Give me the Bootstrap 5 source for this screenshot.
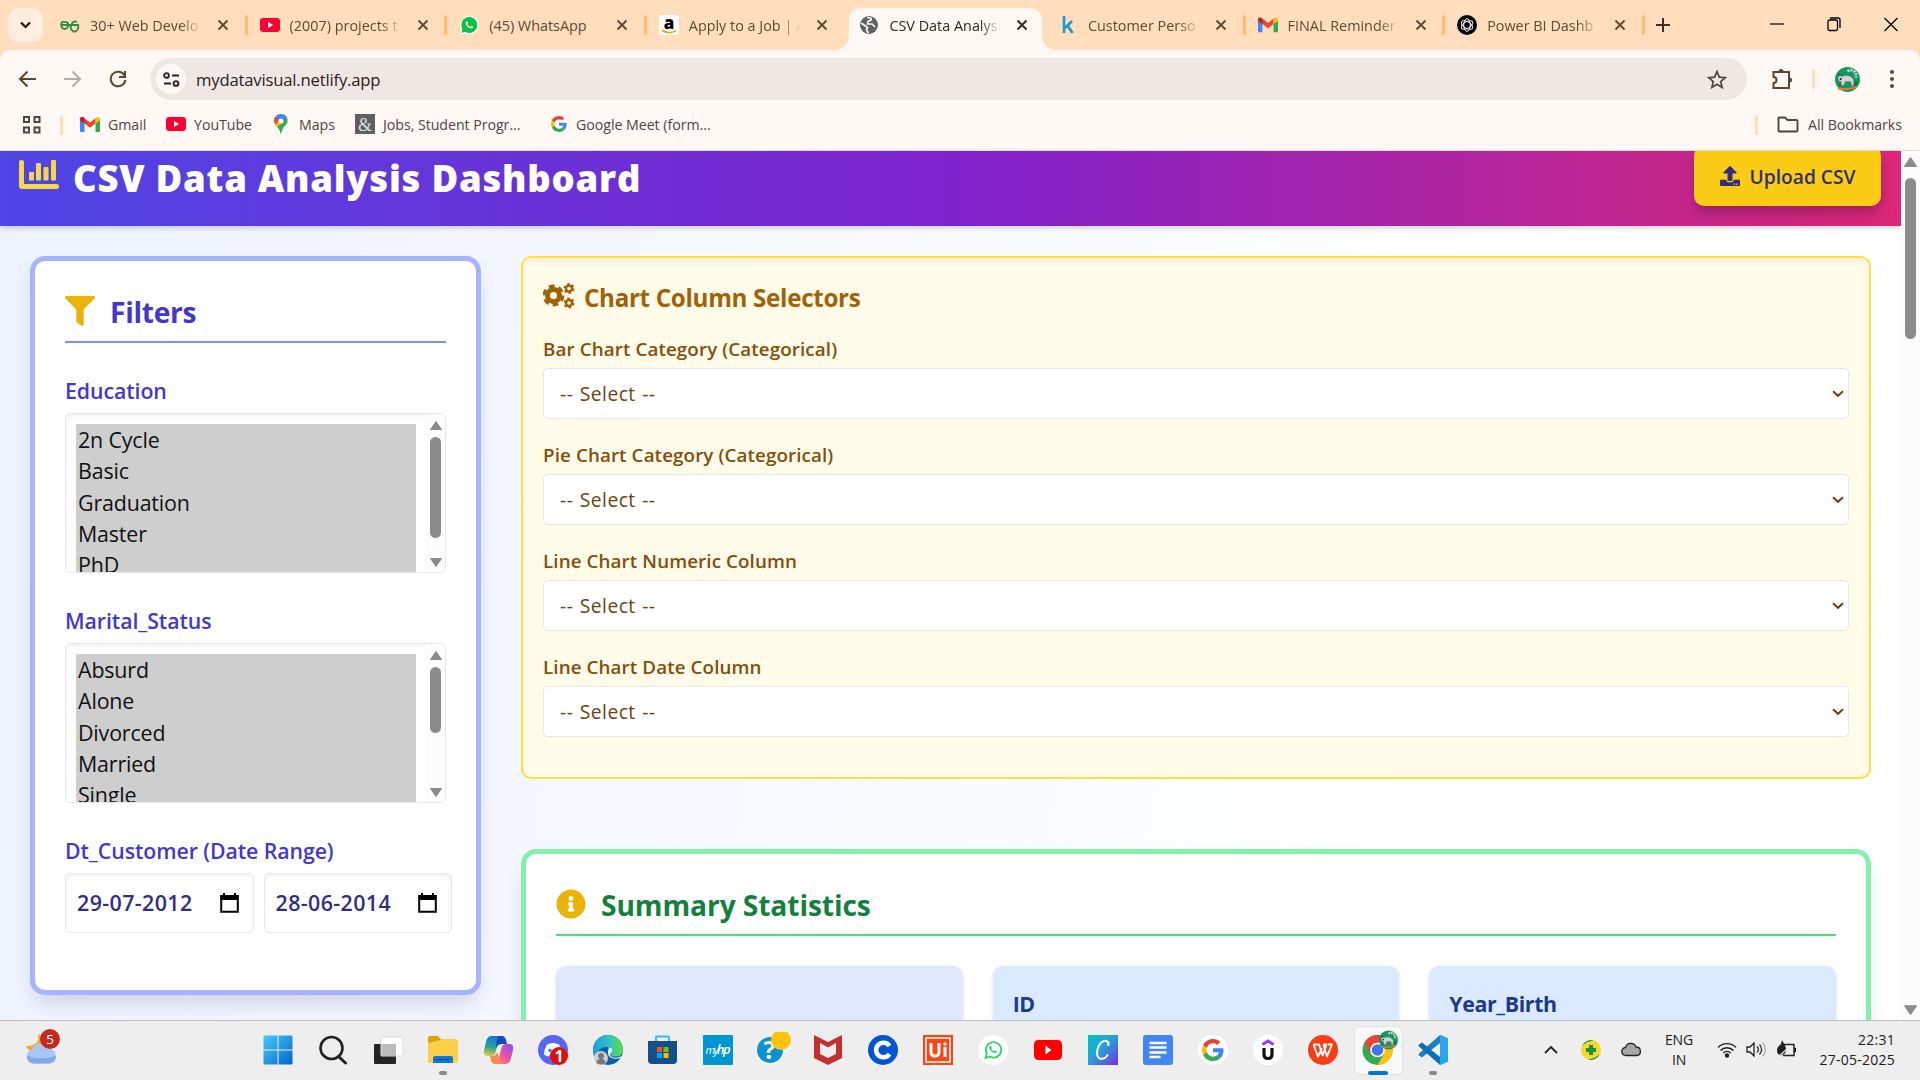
<!DOCTYPE html>
<html lang="en">
<head>
<meta charset="utf-8">
<title>CSV Data Analysis Dashboard</title>
<link rel="stylesheet" href="https://cdn.jsdelivr.net/npm/bootstrap@5.3.0/dist/css/bootstrap.min.css">
<script src="https://cdn.jsdelivr.net/npm/bootstrap@5.3.0/dist/js/bootstrap.bundle.min.js"></script>
<style>
body{width:1920px;height:1080px;overflow:hidden;font-family:"Open Sans","Noto Sans",sans-serif;background:#fff8f5;color:#4e4540}
svg{flex:none;display:block}
.tabstrip{height:50px;background:#ffddbd;padding-left:8px}
.tab-search{width:35px;height:34px;border-radius:11px;background:#ffeee0;margin:8px 7px 0 0}
.tab-item{width:199.6px;height:42px;margin-top:8px;padding:5px 0 0 10px;position:relative;font-size:14.4px;color:#5d4a33}
.tab-label{width:113px;margin-left:10px;white-space:nowrap;overflow:hidden;-webkit-mask-image:linear-gradient(90deg,#000 80%,transparent 99%);line-height:26px}
.tab-label.whole{-webkit-mask-image:none}
.tab-item>.cross{margin:6px 0 0 14px}
.tab-item.divided::after{content:"";width:3px;height:20px;border-radius:2px;background:#ffbd6e;position:absolute;right:2px;top:7px}
.tab-item.current{background:#fff8f5;border-radius:12px 12px 0 0;width:193px;margin-right:5.6px;margin-left:1px;color:#30261d}
.tab-item.current::before,.tab-item.current::after{content:"";position:absolute;bottom:0;width:14px;height:14px}
.tab-item.current::before{left:-14px;background:radial-gradient(circle at 0 0,transparent 13.5px,#fff8f5 14px)}
.tab-item.current::after{right:-14px;background:radial-gradient(circle at 100% 0,transparent 13.5px,#fff8f5 14px)}
.new-tab{margin:18px 0 0 9px}
.win-controls{margin:17px 22px 0 0;gap:43px}
.toolbar-row{height:58px;padding:0 19px 0 18px;background:#fff8f5;border-radius:10px 10px 0 0}
.chrome-top{background:#ffddbd}
.omnibox{height:42px;width:1597px;border-radius:21px;background:#efe7e3;padding:0 20px 0 6px;margin-left:23px;font-size:16.7px;color:#2a211b;letter-spacing:-.2px}
.omnibox span{padding-top:1px}
.site-chip{width:30px;height:30px;border-radius:50%;background:#fff8f5;margin-right:10px}
.vsep{width:3px;height:20px;border-radius:2px;background:#ffddbd}
.bookmarks{height:43px;padding:0 18px 9px 22px;font-size:14.2px;letter-spacing:-.04px;border-bottom:1px solid #e8dcd0;background:#fff8f5}
.bk{gap:8px;white-space:nowrap}
.viewport{height:869px;overflow:hidden}
.page{width:1901px;height:869px;overflow:hidden;background:linear-gradient(100deg,#eef2ff 0%,#f6f8ff 35%,#fff 75%,#fff 100%)}
.page-scroll{width:19px;background:#fcfcfc;padding:6px 0 5px}
.page-scroll .thumb{width:11px;height:161px;border-radius:6px;background:#8b8b8b;margin-top:11px}
.hero{height:100px;margin-top:-25px;padding:0 20px 0 19px;background:linear-gradient(90deg,#4f46e5,#7e22ce 50%,#db2777);box-shadow:0 2px 5px rgba(0,0,0,.18);position:relative}
.hero>svg{margin-bottom:3px}
.hero h1{font-size:36.5px;font-weight:800;color:#fff;margin:4px 0 0 14px;line-height:44px;letter-spacing:.75px;white-space:nowrap}
.btn-upload{width:187px;height:60px;border-radius:10px;background:#facc15;color:#312e81;font-size:19.2px;font-weight:600;letter-spacing:0;box-shadow:0 8px 14px -2px rgba(0,0,0,.25);gap:10px}
.btn-upload span{padding-top:2px}
.layout{padding:30px 30px 0;gap:40px}
.panel{background:#fff;border:5px solid #a5b4fc;border-radius:15px;padding:30px;box-shadow:0 12px 20px -4px rgba(30,30,90,.16)}
.filters{width:451px;height:739px}
.panel-title{border-bottom:2px solid #818cf8;padding-bottom:8px;gap:15px;color:#4338ca;font-size:28.2px;font-weight:700;line-height:42px;height:52px;margin:0;letter-spacing:-.3px}
.panel-title svg{margin-bottom:2px}
.filter-label{font-size:21.3px;font-weight:600;color:#4338ca;line-height:30px;margin:33px 0 7px;letter-spacing:-.08px;white-space:nowrap}
.listbox{height:160px;border:1px solid #e5e7eb;border-radius:5px;overflow:hidden;padding:10px 0 0 10px;box-shadow:inset 0 3px 5px rgba(0,0,0,.05);color:#111}
.listbox ul{width:340px;background:#cecece;font-size:21.4px;letter-spacing:-.15px}
.listbox li{line-height:31.25px;padding-left:2px;height:31.25px}
.lb-scroll{width:19px;height:158px;margin:-10px 0 0 10px;padding:7px 0 5px;background:#fcfcfc}
.lb-scroll .thumb{width:11px;border-radius:6px;background:#8b8b8b;margin-top:7px}
.date-field{height:60px;border:1px solid #e5e7eb;border-radius:5px;box-shadow:inset 0 3px 5px rgba(0,0,0,.05);padding:0 14px 0 11px;font-size:21.4px;font-weight:600;letter-spacing:.4px;color:#312e81;white-space:nowrap}
.date-pair{gap:10px;width:387px}
.selectors{background:#fefce8;border:2px solid #fde047;border-radius:10px;padding:20px;height:523px;box-shadow:inset 0 3px 6px rgba(0,0,0,.06)}
.selectors h2{font-size:24.2px;font-weight:700;color:#a16207;line-height:36px;letter-spacing:-.32px;margin:0 0 21px;gap:9px}
.selectors h2 span{padding-top:2px;height:36px}
.selectors label{font-size:18.8px;font-weight:600;color:#854d0e;line-height:28px;margin-bottom:5px;display:block;letter-spacing:.1px}
.selectors .form-select{height:51px;margin-bottom:22px;border:1px solid #e5e7eb;border-radius:5px;padding:2px 16px 0;font-size:19.3px;color:#713f12;letter-spacing:.45px;word-spacing:1px;background-color:#fff;background-position:right 4px center;background-size:12px 8px;background-image:url("data:image/svg+xml,%3Csvg xmlns='http://www.w3.org/2000/svg' viewBox='0 0 12 8'%3E%3Cpath d='M1 1.2l5 4.6 5-4.6' fill='none' stroke='%23713f12' stroke-width='2'/%3E%3C/svg%3E")}
.summary{border-color:#86efac;margin-top:70px;height:400px}
.summary .panel-title{color:#15803d;border-color:#4ade80;margin-bottom:30px;letter-spacing:-.1px}
.stats-row{gap:30px}
.stat{height:220px;border-radius:10px;background:#dbeafe;box-shadow:0 1px 4px rgba(0,0,0,.12);padding:22px 20px;font-size:21.4px;font-weight:700;line-height:31px;color:#1e3a8a;letter-spacing:-.4px}
.stat.blank{background:#e0e7ff}
.taskbar{height:60px;background:#eee;border-top:1px solid #bbb;color:#1b1b1b;position:relative}
.slot{width:55px;height:59px;padding-bottom:2px}
.slot .run{position:absolute;left:50%;bottom:5px;width:8px;height:4px;border-radius:2px;background:#888;transform:translateX(-50%)}
.slot .run.on{width:20px;background:#0078d4}
.slot.focused::before{content:"";position:absolute;inset:5px 3px;border-radius:6px;background:#f9f9f9;border:1px solid #e2e2e2}
.slot>svg{position:relative}
.tray{font-size:14px;line-height:19.5px;letter-spacing:-.15px;padding:0 25px 2px 0}
.clock{width:98px;letter-spacing:.25px}
.w-weather{width:250.5px;padding-left:24px}
.w-weather svg{margin-top:6px}
</style>
</head>
<body class="d-flex flex-column">
<svg width="0" height="0" class="position-absolute">
<defs>
<symbol id="x" viewBox="0 0 12 12"><path d="M1.5 1.5l9 9m0-9l-9 9" stroke="currentColor" stroke-width="1.9"/></symbol>
<symbol id="yt" viewBox="0 0 20 14"><rect width="20" height="14" rx="3.2" fill="#f03"/><path d="M8 4v6l5.2-3z" fill="#fff"/></symbol>
<symbol id="gm" viewBox="0 0 20 15"><path d="M0 3v10.5A1.5 1.5 0 0 0 1.500 15H4.500V6z" fill="#4285f4"/><path d="M20 3v10.500A1.500 1.500 0 0 1 18.500 15H15.500V6z" fill="#34a853"/><path d="M0 2.200C0 .3 2 -.5 3.500.6L10 5.500 15.500 1.300V6.500L10 10.800 4.500 6.500 0 3.500z" fill="#ea4335"/><path d="M0 2.200C0 .3 2-.5 3.500.6l1 .8v5.100L0 3.500z" fill="#c5221f"/><path d="M20 2.200C20 .3 18-.5 16.500.6l-1 .8v5.100L20 3.500z" fill="#fbbc04"/></symbol>
<symbol id="goog" viewBox="0 0 48 48"><path fill="#EA4335" d="M24 9.500c3.540 0 6.710 1.220 9.210 3.600l6.850-6.850C35.900 2.380 30.470 0 24 0 14.620 0 6.510 5.380 2.560 13.220l7.980 6.190C12.430 13.720 17.740 9.500 24 9.500z"/><path fill="#4285F4" d="M46.980 24.550c0-1.570-.15-3.090-.38-4.550H24v9.020h12.940c-.58 2.960-2.260 5.480-4.780 7.180l7.730 6c4.510-4.180 7.090-10.360 7.090-17.650z"/><path fill="#FBBC05" d="M10.530 28.590c-.48-1.450-.76-2.990-.76-4.590s.27-3.140.76-4.590l-7.980-6.190C.92 16.460 0 20.120 0 24c0 3.880.92 7.540 2.560 10.780l7.970-6.190z"/><path fill="#34A853" d="M24 48c6.480 0 11.930-2.130 15.890-5.810l-7.730-6c-2.150 1.450-4.920 2.300-8.160 2.300-6.260 0-11.570-4.220-13.470-9.910l-7.980 6.190C6.510 42.620 14.620 48 24 48z"/></symbol>
<symbol id="phone" viewBox="0 0 24 24"><path d="M17.470 14.380c-.3-.15-1.760-.87-2.030-.97-.27-.1-.47-.15-.67.15-.2.300-.77.970-.94 1.160-.17.200-.35.220-.64.080-.3-.150-1.260-.460-2.390-1.480-.88-.790-1.480-1.760-1.650-2.060-.17-.300-.02-.460.130-.610.130-.130.300-.350.450-.520.150-.170.200-.300.300-.500.100-.200.050-.370-.02-.520-.08-.150-.67-1.610-.92-2.210-.24-.580-.49-.500-.67-.510l-.57-.010c-.2 0-.52.070-.79.370-.27.300-1.040 1.020-1.040 2.480s1.070 2.880 1.210 3.070c.15.200 2.100 3.200 5.080 4.490.71.310 1.260.490 1.690.620.710.230 1.360.200 1.870.120.570-.090 1.760-.720 2.010-1.410.250-.690.250-1.290.170-1.410-.07-.120-.27-.200-.57-.350z"/></symbol>
<symbol id="up" viewBox="0 0 12 9"><path d="M6 0.500L11.500 8.500H.5z" fill="#8b8b8b" stroke="#8b8b8b" stroke-linejoin="round"/></symbol>
<symbol id="down" viewBox="0 0 12 9"><path d="M6 8.500L11.500.500H.5z" fill="#8b8b8b" stroke="#8b8b8b" stroke-linejoin="round"/></symbol>
<symbol id="cal" viewBox="0 0 19 20"><path d="M1.200 3h16.600v15.800H1.200z" fill="none" stroke="#000" stroke-width="2"/><path d="M.5 2h18v5H.5zM3 0h2v3H3zM14 0h2v3h-2z"/></symbol>
<symbol id="lemur" viewBox="0 0 24 24"><circle cx="12" cy="12" r="12" fill="#12995f"/><path d="M3 7l4 3M18 18l3-4M4 17l4 1" stroke="#0a6b3d" stroke-width="2"/><path d="M12 4c5-3 9 1 8 6" fill="none" stroke="#ddd" stroke-width="2.500" stroke-dasharray="2 1"/><path d="M3 11c0-3 2-3 4-2 4-2 10 0 11 4v5h-2l-1-4H10l-2 4H6v-4c-2 0-3-1-3-3z" fill="#d4d4d4" stroke="#777" stroke-width=".6"/><circle cx="5.500" cy="11.500" r="1" fill="#222"/><path d="M3 20.500c5 1 12 1 18-1.500" stroke="#e8762c" stroke-width="2" fill="none"/></symbol>
</defs></svg>

<header class="chrome-top">
  <div class="tabstrip d-flex align-items-start">
    <div class="tab-search d-flex align-items-center justify-content-center"><svg width="11" height="8" viewBox="0 0 11 8"><path d="M1 1.500l4.500 4.500L10 1.500" fill="none" stroke="#1c1610" stroke-width="2.200"/></svg></div>
    <div class="tab-item divided d-flex"><svg width="20" height="24" viewBox="0 0 20 24"><path d="M1 12h18M8.500 12a3.700 4 0 1 1-6-3.200h3a3.500 3.500 0 0 1 3 3.200M11.500 12a3.700 4 0 1 0 6 0M11.500 12a3.700 4 0 0 1 5.500-3" fill="none" stroke="#2f8d46" stroke-width="1.800"/></svg><div class="tab-label">30+ Web Develo</div><svg class="cross" width="12" height="12"><use href="#x"/></svg></div>
    <div class="tab-item divided d-flex"><svg width="20" height="24"><use href="#yt" y="5" height="14"/></svg><div class="tab-label">(2007) projects t</div><svg class="cross" width="12" height="12"><use href="#x"/></svg></div>
    <div class="tab-item divided d-flex"><svg width="20" height="24" viewBox="0 0 20 24"><path d="M1 21.500l1.300-5A9.300 9.300 0 1 1 6 20.200z" fill="#fff"/><circle cx="10.300" cy="12" r="8" fill="#0cc143"/><path d="M2.300 20l1.400-4.800 3.400 3.300z" fill="#0cc143"/><use href="#phone" x="3" y="4.700" width="14.500" height="14.500" fill="#fff"/></svg><div class="tab-label whole">(45) WhatsApp</div><svg class="cross" width="12" height="12"><use href="#x"/></svg></div>
    <div class="tab-item d-flex"><svg width="20" height="24" viewBox="0 0 20 24"><rect y="2" width="20" height="20" rx="3" fill="#fff"/><text x="10" y="15.500" text-anchor="middle" font-size="17" font-weight="800" fill="#000">a</text><path d="M3 17.300c4 3 10 3 14 .3" stroke="#f90" stroke-width="1.700" fill="none"/></svg><div class="tab-label">Apply to a Job | A</div><svg class="cross" width="12" height="12"><use href="#x"/></svg></div>
    <div class="tab-item current d-flex"><svg width="20" height="24" viewBox="0 0 20 24"><circle cx="10" cy="12" r="9" fill="#5f6368"/><path d="M8 4.500c3 0 5 .5 4 2.500l-3 1.500-.5 2.500h4.500l3 3M2 10l4.500 3 2 1.500-1 2.500 2 3" fill="none" stroke="#fff8f5" stroke-width="1.700"/></svg><div class="tab-label">CSV Data Analysi</div><svg class="cross" width="12" height="12"><use href="#x"/></svg></div>
    <div class="tab-item divided d-flex"><svg width="20" height="24" viewBox="0 0 20 24"><path d="M6 3v17M14 8l-7 7M9.500 12.500l5 7.500" stroke="#179ccb" stroke-width="2.600" fill="none"/></svg><div class="tab-label">Customer Perso</div><svg class="cross" width="12" height="12"><use href="#x"/></svg></div>
    <div class="tab-item divided d-flex"><svg width="20" height="24"><use href="#gm" y="4.500" height="15"/></svg><div class="tab-label">FINAL Reminder</div><svg class="cross" width="12" height="12"><use href="#x"/></svg></div>
    <div class="tab-item divided d-flex"><svg width="20" height="24" viewBox="0 0 20 24"><circle cx="10" cy="12" r="10" fill="#000"/><g fill="none" stroke="#fff" stroke-width="1"><ellipse cx="10" cy="12" rx="3.300" ry="6.300"/><ellipse cx="10" cy="12" rx="3.300" ry="6.300" transform="rotate(60 10 12)"/><ellipse cx="10" cy="12" rx="3.300" ry="6.300" transform="rotate(120 10 12)"/></g></svg><div class="tab-label">Power BI Dashb</div><svg class="cross" width="12" height="12"><use href="#x"/></svg></div>
    <svg class="new-tab" width="14" height="14"><path d="M7 0v14M0 7h14" stroke="#3f3225" stroke-width="2"/></svg>
    <div class="win-controls d-flex ms-auto">
      <svg width="14" height="15"><path d="M0 7h14" stroke="#000" stroke-width="1.200"/></svg>
      <svg width="14" height="15" fill="none" stroke="#000" stroke-width="1.300"><rect x="1" y="3" width="9.500" height="10.500" rx="1.500"/><path d="M3 1h8q2 0 2 2v8"/></svg>
      <svg width="14" height="15" stroke="#000" stroke-width="1.200"><path d="M.5 1l13 13M13.500 1l-13 13"/></svg>
    </div>
  </div>
  <div class="toolbar-row d-flex align-items-center">
    <svg width="18" height="18" fill="none" stroke="#5a4530" stroke-width="2"><path d="M18 9H2.500M9.500 1.500L2 9l7.500 7.500"/></svg>
    <svg style="margin-left:28px" width="18" height="18" fill="none" stroke="#b5aca6" stroke-width="2"><path d="M0 9h15.500M8.500 1.500L16 9l-7.500 7.500"/></svg>
    <svg style="margin-left:27px" width="18" height="18" fill="none" stroke="#5a4530" stroke-width="2"><path d="M15.500 5.500A7.300 7.300 0 1 0 16.300 10"/><path d="M16 1v6h-6"/></svg>
    <div class="omnibox d-flex align-items-center">
      <div class="site-chip d-flex align-items-center justify-content-center"><svg width="17" height="15" fill="none" stroke="#2a211b" stroke-width="1.900"><circle cx="3.500" cy="3.500" r="2.400"/><path d="M9 3.500h7M1 11.500h7"/><circle cx="13" cy="11.500" r="2.400"/></svg></div>
      <span>mydatavisual.netlify.app</span>
      <svg class="ms-auto" width="20" height="19" viewBox="0 0 20 19"><path d="M10 1.500l2.300 5.600 6 .5-4.600 3.900 1.400 5.900L10 14.200l-5.100 3.200 1.400-5.900L1.700 7.600l6-.5z" fill="none" stroke="#4e4540" stroke-width="1.700"/></svg>
    </div>
    <svg style="margin-left:24px" width="22" height="22" viewBox="0 0 22 22"><path d="M2.500 4h15.500v16h-15.500v-5a3 3 0 0 0 0-6z" fill="none" stroke="#5a4530" stroke-width="2"/><path d="M7.500 3.500a2.500 2.500 0 0 1 5 0zM18.500 9.500a2.500 2.500 0 0 1 0 5z" fill="#5a4530"/></svg>
    <div class="vsep" style="margin-left:19px"></div>
    <svg style="margin-left:20px" width="25" height="25"><use href="#lemur"/></svg>
    <svg class="ms-auto" style="margin-right:7px" width="4" height="18" fill="#5a4530"><circle cx="2" cy="2" r="2"/><circle cx="2" cy="9" r="2"/><circle cx="2" cy="16" r="2"/></svg>
  </div>
  <div class="bookmarks d-flex align-items-center">
    <svg width="20" height="20" fill="none" stroke="#4e4540" stroke-width="2"><path d="M2 2h5v5H2zM12.500 2h5v5h-5zM2 12.500h5v5H2zM12.500 12.500h5v5h-5z"/></svg>
    <div class="vsep" style="margin-left:18px"></div>
    <div class="bk d-flex align-items-center" style="margin-left:17px"><svg width="20" height="15"><use href="#gm"/></svg><span style="width:58px">Gmail</span></div>
    <div class="bk d-flex align-items-center"><svg width="20" height="14"><use href="#yt"/></svg><span style="width:77px">YouTube</span></div>
    <div class="bk d-flex align-items-center"><svg width="20" height="20" viewBox="0 0 20 20"><path d="M4.500 11C2 7 3 3.500 5 2l4 4z" fill="#ea4335"/><path d="M5 2c3-3 9-2.500 11 1.500L9 11z" fill="#4285f4"/><path d="M16 3.500c1.500 4 0 7-3.500 10L9.500 20C9 16 7 14 5.500 12z" fill="#34a853"/><path d="M4.500 11l4-5 2.500 3-5 4z" fill="#fbbc04"/><circle cx="10" cy="7" r="2.500" fill="#fff"/></svg><span style="width:56px">Maps</span></div>
    <div class="bk d-flex align-items-center"><svg width="20" height="20"><rect width="20" height="20" fill="#5f6065"/><text x="10" y="16.500" text-anchor="middle" font-family="Liberation Serif,serif" font-size="18" fill="#ddd">&amp;</text></svg><span style="width:167px">Jobs, Student Progr...</span></div>
    <div class="bk d-flex align-items-center"><svg width="18" height="16"><use href="#goog"/></svg><span>Google Meet (form...</span></div>
    <div class="vsep ms-auto" style="margin-right:19px"></div>
    <svg width="22" height="17" fill="none" stroke="#4e4540" stroke-width="1.900"><path d="M1.500 2.500q0-1 1-1h5.500l2.500 2.500h9q1 0 1 1v9.500q0 1-1 1h-17q-1 0-1-1z"/></svg>
    <span style="margin-left:9px">All Bookmarks</span>
  </div>
</header>

<div class="viewport d-flex">
  <main class="page">
    <div class="hero d-flex align-items-center">
      <svg width="40" height="32" viewBox="0 0 40 32" fill="#f3d84b"><path d="M0 2.500Q0 1 2.500 1T5 2.500V25h32.500q2.500 0 2.500 2.500T37.500 30H3Q0 30 0 27z"/><rect x="10" y="13" width="5" height="8.500" rx="1"/><rect x="17" y="4" width="5" height="17.500" rx="1"/><rect x="24.500" y="8" width="5" height="13.500" rx="1"/><rect x="32" y="1" width="5" height="20.500" rx="1"/></svg>
      <h1>CSV Data Analysis Dashboard</h1>
      <button class="btn btn-upload ms-auto d-flex align-items-center justify-content-center border-0"><svg width="20" height="20" viewBox="0 0 512 512" fill="currentColor"><path d="M296 384h-80c-13.300 0-24-10.700-24-24V192h-87.700c-17.800 0-26.700-21.500-14.100-34.100L242.300 5.700c7.500-7.500 19.800-7.500 27.300 0l152.200 152.200c12.600 12.600 3.700 34.100-14.100 34.100H320v168c0 13.300-10.700 24-24 24zm216-8v112c0 13.300-10.700 24-24 24H24c-13.300 0-24-10.700-24-24V376c0-13.300 10.700-24 24-24h136v8c0 30.900 25.100 56 56 56h80c30.900 0 56-25.100 56-56v-8h136c13.300 0 24 10.700 24 24zm-124 88c0-11-9-20-20-20s-20 9-20 20 9 20 20 20 20-9 20-20zm64 0c0-11-9-20-20-20s-20 9-20 20 9 20 20 20 20-9 20-20z"/></svg><span>Upload CSV</span></button>
    </div>
    <div class="layout d-flex align-items-start">
      <aside class="panel filters">
        <h2 class="panel-title d-flex align-items-center"><svg width="30" height="30" viewBox="0 0 512 512" fill="#eab308"><path d="M487.976 0H24.028C2.710 0-8.047 25.866 7.058 40.971L192 225.941V432c0 7.831 3.821 15.170 10.237 19.662l80 55.980C298.020 518.690 320 507.493 320 487.980V225.941l184.947-184.970C520.021 25.896 509.338 0 487.976 0z"/></svg>Filters</h2>
        <div class="filter-label">Education</div>
        <div class="listbox d-flex align-items-start">
          <ul class="list-unstyled mb-0"><li>2n Cycle</li><li>Basic</li><li>Graduation</li><li>Master</li><li>PhD</li></ul>
          <div class="lb-scroll d-flex flex-column align-items-center"><svg width="12" height="9"><use href="#up"/></svg><div class="thumb" style="height:101px"></div><svg class="mt-auto" width="12" height="9"><use href="#down"/></svg></div>
        </div>
        <div class="filter-label">Marital_Status</div>
        <div class="listbox d-flex align-items-start">
          <ul class="list-unstyled mb-0"><li>Absurd</li><li>Alone</li><li>Divorced</li><li>Married</li><li>Single</li></ul>
          <div class="lb-scroll d-flex flex-column align-items-center"><svg width="12" height="9"><use href="#up"/></svg><div class="thumb" style="height:66px"></div><svg class="mt-auto" width="12" height="9"><use href="#down"/></svg></div>
        </div>
        <div class="filter-label">Dt_Customer (Date Range)</div>
        <div class="date-pair d-flex">
          <div class="date-field flex-fill d-flex align-items-center justify-content-between"><span>29-07-2012</span><svg width="19" height="20"><use href="#cal"/></svg></div>
          <div class="date-field flex-fill d-flex align-items-center justify-content-between"><span>28-06-2014</span><svg width="19" height="20"><use href="#cal"/></svg></div>
        </div>
      </aside>
      <div class="flex-fill">
        <section class="selectors">
          <h2 class="d-flex align-items-center"><svg width="32" height="26" viewBox="0 0 32 26" fill="none" stroke="#a16207"><circle cx="10.500" cy="12.500" r="6" stroke-width="5"/><circle cx="10.500" cy="12.500" r="9.200" stroke-width="3.500" stroke-dasharray="5.600 4.030"/><circle cx="26" cy="5.500" r="3" stroke-width="2.400"/><circle cx="26" cy="5.500" r="4.600" stroke-width="1.800" stroke-dasharray="2.600 2.210"/><circle cx="26" cy="20" r="3" stroke-width="2.400"/><circle cx="26" cy="20" r="4.600" stroke-width="1.800" stroke-dasharray="2.600 2.210"/></svg><span>Chart Column Selectors</span></h2>
          <label>Bar Chart Category (Categorical)</label>
          <select class="form-select"><option>-- Select --</option></select>
          <label>Pie Chart Category (Categorical)</label>
          <select class="form-select"><option>-- Select --</option></select>
          <label>Line Chart Numeric Column</label>
          <select class="form-select"><option>-- Select --</option></select>
          <label>Line Chart Date Column</label>
          <select class="form-select"><option>-- Select --</option></select>
        </section>
        <section class="panel summary">
          <h2 class="panel-title d-flex align-items-center"><svg width="30" height="30" viewBox="0 0 512 512" fill="#eab308"><path d="M256 8C119.043 8 8 119.083 8 256c0 136.997 111.043 248 248 248s248-111.003 248-248C504 119.083 392.957 8 256 8zm0 110c23.196 0 42 18.804 42 42s-18.804 42-42 42-42-18.804-42-42 18.804-42 42-42zm56 254c0 6.627-5.373 12-12 12h-88c-6.627 0-12-5.373-12-12v-24c0-6.627 5.373-12 12-12h12v-64h-12c-6.627 0-12-5.373-12-12v-24c0-6.627 5.373-12 12-12h64c6.627 0 12 5.373 12 12v100h12c6.627 0 12 5.373 12 12v24z"/></svg>Summary Statistics</h2>
          <div class="stats-row d-flex"><div class="stat blank flex-fill w-100"></div><div class="stat flex-fill w-100">ID</div><div class="stat flex-fill w-100">Year_Birth</div></div>
        </section>
      </div>
    </div>
  </main>
  <div class="page-scroll d-flex flex-column align-items-center"><svg width="13" height="10"><use href="#up"/></svg><div class="thumb"></div><svg class="mt-auto" width="13" height="10"><use href="#down"/></svg></div>
</div>

<footer class="taskbar d-flex">
  <div class="w-weather d-flex"><svg width="38" height="38" viewBox="0 0 38 38"><path d="M14 7c2 8-3 12-12 12 1 4 5 5 9 5l8-5V10z" fill="#f5a623"/><path d="M9 36.500a7 7 0 0 1-1-13.800 9 9 0 0 1 17-1.500 7.800 7.800 0 0 1 1 15.300z" fill="#a9c6f5"/><path d="M9 36.500a7 7 0 0 1-6-8c8 4 18 4 29 0a7 7 0 0 1-6 8z" fill="#83a9ea"/><circle cx="26" cy="12" r="10" fill="#c42b1c"/><text x="26" y="17" font-size="13.500" fill="#fff" text-anchor="middle">5</text></svg></div>
  <div class="slot position-relative d-flex align-items-center justify-content-center"><svg width="30" height="30" viewBox="0 0 30 30"><defs><linearGradient id="wg" x2="1" y2="1"><stop stop-color="#4cc9ff"/><stop offset="1" stop-color="#0067c8"/></linearGradient></defs><path fill="url(#wg)" d="M.5 1.500Q.5.500 1.500.500h13v14H.5zM15.500.500h13q1 0 1 1v13h-14zM.5 15.500h14v14h-13q-1 0-1-1zM15.500 15.500h14v13q0 1-1 1h-13z"/></svg></div>
  <div class="slot position-relative d-flex align-items-center justify-content-center"><svg width="30" height="30" viewBox="0 0 30 30" fill="none" stroke="#222"><circle cx="13.500" cy="13" r="11" stroke-width="2.600"/><path d="M20.500 21.500l7 6.500" stroke-width="3" stroke-linecap="round"/></svg></div>
  <div class="slot position-relative d-flex align-items-center justify-content-center"><svg width="32" height="30" viewBox="0 0 32 30"><rect x="2" y="9" width="22" height="20" rx="1" fill="#242424"/><rect x="9" y="2" width="22" height="19" rx="1" fill="#fff" stroke="#ddd"/><path d="M9.500 9H24v12H9.500z" fill="#bbb"/></svg></div>
  <div class="slot position-relative d-flex align-items-center justify-content-center"><svg width="30" height="30" viewBox="0 0 30 30"><path d="M0 3q0-2 2-2h8l3 3.500h15q2 0 2 2V10H0z" fill="#e3a008"/><path d="M0 8l13-3h15q2 0 2 2v18q0 3-2 3H2q-2 0-2-2z" fill="#ffcf48"/><path d="M5 28v-5q0-2 2-2h16q2 0 2 2v5z" fill="#0f7ad4"/><path d="M8.500 24.500h13" stroke="#064a8c"/></svg><span class="run"></span></div>
  <div class="slot position-relative d-flex align-items-center justify-content-center"><svg width="31" height="30" viewBox="0 0 31 30"><defs><linearGradient id="ca" x1=".2" x2="0" y2="1"><stop stop-color="#1579d8"/><stop offset=".5" stop-color="#25a594"/><stop offset="1" stop-color="#ffd02f"/></linearGradient><linearGradient id="cb" x1=".8" x2="0" y2="1"><stop stop-color="#9250e6"/><stop offset=".55" stop-color="#f0569a"/><stop offset="1" stop-color="#ff9a4a"/></linearGradient></defs><path d="M8.500 1H19q-3 2-4 7l-2.500 9q-1 4-5 4H4.500Q0 21 1 15L3.500 5Q5 1 8.500 1z" fill="url(#ca)"/><path d="M15 1h4q3 0 4 4l1 4h-5q-4 0-6 4 .5-9 2-12z" fill="#1b48b8"/><path d="M22.500 29H12q3-2 4-7l2.500-9q1-4 5-4h3q4.500 0 3.500 6l-2.500 10q-1.500 4-5 4z" fill="url(#cb)"/><path d="M16 29h-4q-3 0-4-4l-1-4h2q4 0 5.500-4 2 8 1.500 12z" fill="#f58a4b"/></svg></div>
  <div class="slot position-relative d-flex align-items-center justify-content-center"><svg width="30" height="30" viewBox="0 0 30 30"><circle cx="15" cy="15" r="15" fill="#5865f2"/><path d="M9 9.500q3-1.500 6-1.500t6 1.500q3 5 3 10-3 2-5 2l-1-2q-3 .5-6 0l-1 2q-2 0-5-2 0-5 3-10z" fill="#fff"/><circle cx="12" cy="15.500" r="1.800" fill="#5865f2"/><circle cx="21" cy="21" r="9" fill="#e00b0b"/><text x="21" y="27" font-size="16" font-weight="700" fill="#fff" text-anchor="middle">1</text></svg></div>
  <div class="slot position-relative d-flex align-items-center justify-content-center"><svg width="30" height="30" viewBox="0 0 30 30"><defs><linearGradient id="eg"><stop stop-color="#1b9de2"/><stop offset=".5" stop-color="#2cc3c3"/><stop offset="1" stop-color="#5fdc48"/></linearGradient></defs><circle cx="15" cy="15" r="15" fill="#0f5ea8"/><path d="M0 15a15 15 0 0 1 30 0c0 5-4 7-8 6.500-3 0-5-1.500-4-3.500 1-3-1-6-5-6-6 0-10 5-9 12-3-2-4-6-4-9z" fill="url(#eg)"/><path d="M17 19c0 4 6 5 12 2l-1 2c-6 2-13 0-13-5s1-6 3-5 1 3 0 5z" fill="#e9f4fb"/><circle cx="8" cy="23" r="7" fill="#cfcfcf"/><circle cx="8" cy="21" r="3" fill="#777"/><path d="M3.500 28q0-4 4.500-4t4.500 4q-4 3-9 0z" fill="#777"/></svg></div>
  <div class="slot position-relative d-flex align-items-center justify-content-center"><svg width="30" height="30" viewBox="0 0 30 30"><path d="M8 7V2.500q0-1 1-1h11q1 0 1 1V7" fill="none" stroke="#33b7f0" stroke-width="2"/><path d="M0 6h29v19q0 4-4 4H4q-4 0-4-4z" fill="#144f8a"/><path d="M9 12h5v5H9z" fill="#f25022"/><path d="M15.500 12h5v5h-5z" fill="#7fba00"/><path d="M9 18h5v5H9z" fill="#00a4ef"/><path d="M15.500 18h5v5h-5z" fill="#ffb900"/></svg></div>
  <div class="slot position-relative d-flex align-items-center justify-content-center"><svg width="30" height="30"><rect width="30" height="30" rx="1" fill="#0096d6"/><text x="15" y="19" text-anchor="middle" font-size="11" font-style="italic" fill="#fff" textLength="25">my<tspan font-size="13" font-weight="600">hp</tspan></text></svg></div>
  <div class="slot position-relative d-flex align-items-center justify-content-center"><svg width="36" height="36" viewBox="0 0 36 36"><circle cx="15.500" cy="18.500" r="14" fill="#fff"/><circle cx="15" cy="18" r="13" fill="#0a93d0"/><text x="14.500" y="27" font-size="25" font-weight="700" fill="#fff" text-anchor="middle">?</text><circle cx="26" cy="8" r="10" fill="#ffc20e"/></svg></div>
  <div class="slot position-relative d-flex align-items-center justify-content-center"><svg width="28" height="30" viewBox="0 0 28 30"><path d="M0 0l14 7L28 0v23l-14 7-14-7z" fill="#c3302f"/><path d="M6 8l8 4.500L22 8v11l-8 4-8-4z" fill="#eee"/></svg></div>
  <div class="slot position-relative d-flex align-items-center justify-content-center"><svg width="30" height="30"><circle cx="15" cy="15" r="15" fill="#0056d2"/><path d="M21.500 11a7.300 7.300 0 1 0 0 8" fill="none" stroke="#fff" stroke-width="4.500"/></svg></div>
  <div class="slot position-relative d-flex align-items-center justify-content-center"><svg width="30" height="30"><rect width="30" height="30" fill="#fa4616"/><rect x="3" y="3" width="24" height="24" fill="none" stroke="#fff" stroke-width="1.500"/><path d="M8 8v9q0 4 4 4t4-4V8M22 12v10" fill="none" stroke="#fff" stroke-width="3"/><circle cx="22" cy="9" r="1.700" fill="#fff"/></svg></div>
  <div class="slot position-relative d-flex align-items-center justify-content-center"><svg width="30" height="30"><circle cx="15" cy="15" r="15" fill="#fff"/><path d="M7.500 23l1.300-4.500A7.700 7.700 0 1 1 11.700 21.500z" fill="none" stroke="#25d366" stroke-width="1.700"/><use href="#phone" x="7.500" y="7" width="15" height="15" fill="#25d366"/></svg></div>
  <div class="slot position-relative d-flex align-items-center justify-content-center"><svg width="28" height="20" viewBox="0 0 28 20"><rect width="28" height="20" rx="4.500" fill="#f00"/><path d="M11.500 5.500v9l6-4.500z" fill="#fff"/></svg></div>
  <div class="slot position-relative d-flex align-items-center justify-content-center"><svg width="30" height="30"><defs><linearGradient id="cv" x2="1" y2="1"><stop stop-color="#00c4cc"/><stop offset=".5" stop-color="#2a9cd8"/><stop offset="1" stop-color="#7d2ae8"/></linearGradient></defs><rect width="30" height="30" fill="url(#cv)"/><path d="M20 11c2-4-2-7-6-4-5 4-7 14-2 16.500 3 1 6-1 8-4" fill="none" stroke="#fff" stroke-width="2"/></svg></div>
  <div class="slot position-relative d-flex align-items-center justify-content-center"><svg width="30" height="30"><rect width="30" height="30" rx="3" fill="#4285f4"/><path d="M6.500 8h17M6.500 12.500h17M6.500 17.500h17M6.500 22h11" stroke="#fff" stroke-width="2.500"/></svg></div>
  <div class="slot position-relative d-flex align-items-center justify-content-center"><svg width="30" height="30"><circle cx="15" cy="15" r="15" fill="#fff"/><use href="#goog" x="4" y="4" width="22" height="22"/></svg></div>
  <div class="slot position-relative d-flex align-items-center justify-content-center"><svg width="30" height="30"><circle cx="15" cy="15" r="15" fill="#fff"/><path d="M9.500 9.500L15 6l5.500 3.500" fill="none" stroke="#a435f0" stroke-width="3"/><path d="M11 13v6q0 4.500 4 4.500t4-4.500v-6" fill="none" stroke="#111" stroke-width="3.200"/></svg></div>
  <div class="slot position-relative d-flex align-items-center justify-content-center"><svg width="30" height="30"><circle cx="15" cy="15" r="15" fill="#fa3c14"/><path d="M5.500 9.500H11l3.500 11 4-11h-3.500M5.500 9.500L10 21.500 14 13M15.500 9.500L19 21.500l5-12h-4" fill="none" stroke="#fff" stroke-width="1.900" stroke-linejoin="round"/></svg></div>
  <div class="slot focused position-relative d-flex align-items-center justify-content-center"><svg width="40" height="40" viewBox="0 0 40 40"><circle cx="19.500" cy="20" r="15" fill="#34a853"/><path d="M19.500 20L6.500 12.500A15 15 0 0 1 32.500 12.500z" fill="#ea4335"/><path d="M19.500 12.500h13.200A15 15 0 0 1 19.500 35l6.500-11z" fill="#fbc116"/><path d="M6.500 12.500L13 24l6.500-11.500z" fill="#ea4335"/><circle cx="19.500" cy="20" r="7.300" fill="#fff"/><circle cx="19.500" cy="20" r="5.800" fill="#3b78e7"/><use href="#lemur" x="21" y="0" width="19" height="20"/></svg><span class="run on"></span></div>
  <div class="slot position-relative d-flex align-items-center justify-content-center"><svg width="30" height="30" viewBox="0 0 30 30"><path d="M22 0l8 3.500v23L22 30V8L4 22.500 1 20.500q-1-1 0-2z" fill="#1780c6"/><path d="M22 30L1 11.500q-1-1 0-2L4 7.500 22 22z" fill="#0a70b8"/><path d="M22 0l8 3.500v23L22 30z" fill="#2ba5ee"/></svg><span class="run"></span></div>
  <div class="tray ms-auto d-flex align-items-center">
    <svg width="14" height="9"><path d="M1 8l6-6 6 6" fill="none" stroke="#222" stroke-width="1.800"/></svg>
    <svg style="margin-left:23px" width="20" height="20"><circle cx="10" cy="10" r="10" fill="#f4d928"/><path d="M1 6a10 10 0 0 1 12-5.500C8 1 4 3 1 6zM19 14a10 10 0 0 1-12 5.500c5-.5 9-2.500 12-5.500z" fill="#289548"/><path d="M10 5v10M5 10h10" stroke="#1d8f3e" stroke-width="4"/></svg>
    <svg style="margin-left:20px" width="21" height="15"><path d="M5 13.500a4 4 0 0 1-.5-8 5.500 5.500 0 0 1 10.500-.5 4.300 4.300 0 0 1 1 8.500z" fill="#a5a5a5" stroke="#222" stroke-width="1.300"/></svg>
    <div class="text-center" style="margin-left:22px;width:30px">ENG<br>IN</div>
    <svg style="margin-left:23px" width="20" height="17" viewBox="0 0 20 17" fill="none" stroke="#222" stroke-width="1.400"><path d="M1 6.500a12.500 12.500 0 0 1 18 0M3.500 9.500a9 9 0 0 1 13 0M6.300 12a5.500 5.500 0 0 1 7.400 0"/><circle cx="10" cy="14.500" r="1.500" fill="#222"/></svg>
    <svg style="margin-left:9px" width="20" height="17" viewBox="0 0 20 17" fill="none" stroke="#222" stroke-width="1.300"><path d="M1 6h3l4-4v13l-4-4H1zM11 5.500a4 4 0 0 1 0 6M13.500 3.500a7 7 0 0 1 0 10"/><path d="M16.500 1.500a10 10 0 0 1 0 14" stroke="#aaa"/></svg>
    <svg style="margin-left:10px" width="21" height="19" viewBox="0 0 21 19"><path d="M8 4.500h10v11H7" fill="none" stroke="#222" stroke-width="1.500"/><path d="M18.500 8h1.500v4h-1.500z"/><path d="M6 0l-1 4q-4 3-4 6.500 0 4 4 5l4-2q2-4 0-8z" fill="#222"/><path d="M2 17l9-8" stroke="#eee" stroke-width="1.200"/></svg>
    <div class="clock text-end">22:31<br>27-05-2025</div>
  </div>
</footer>
</body>
</html>
